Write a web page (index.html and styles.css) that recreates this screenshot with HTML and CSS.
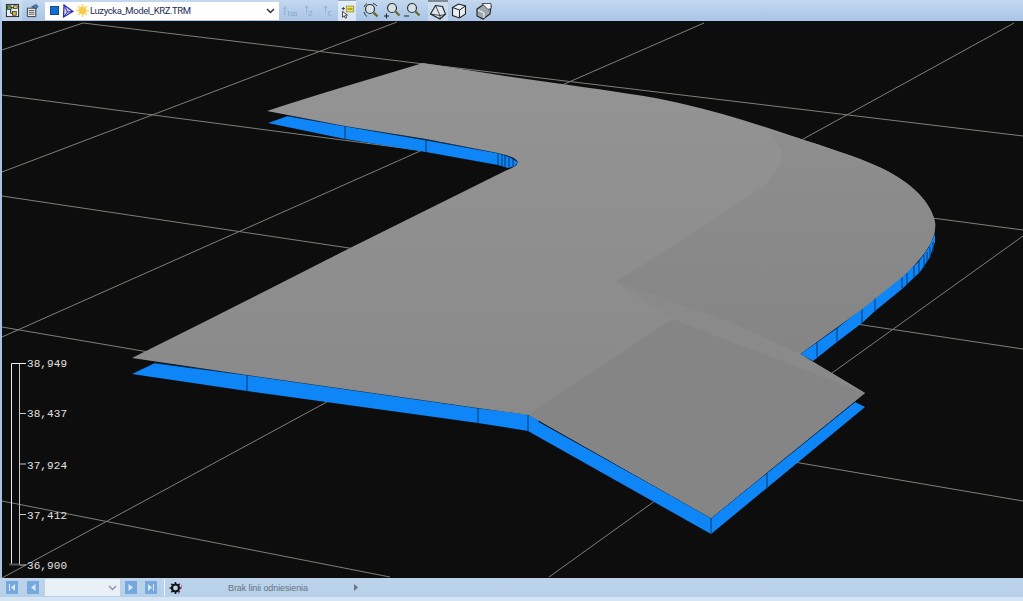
FILE: index.html
```html
<!DOCTYPE html>
<html lang="pl">
<head>
<meta charset="utf-8">
<title>Luzycka_Model_KRZ.TRM</title>
<link rel="stylesheet" href="styles.css">
</head>
<body>
<div class="app">
  <header class="toolbar">
    <div class="tool tool-hot">
      <svg class="ico" viewBox="0 0 16 16"><rect x="1.500" y="1.500" width="13" height="13" fill="#e8eef5" stroke="#222"/><path d="M4 5h8M6 5v6h4" fill="none" stroke="#222"/><rect x="2.500" y="3" width="4" height="4" fill="#5aa84a" stroke="#222" stroke-width=".7"/><rect x="9" y="3" width="4" height="3" fill="#e5d24a" stroke="#222" stroke-width=".7"/><rect x="8" y="9" width="4" height="4" fill="#d9b53a" stroke="#222" stroke-width=".7"/></svg>
    </div>
    <div class="tool">
      <svg class="ico" viewBox="0 0 16 16"><path d="M2.500 5.500h9v9h-9z" fill="#eee" stroke="#333"/><path d="M4 8h6M4 10h6M4 12h6" stroke="#555"/><path d="M7 4l5-2.500 2 2.500-2 2z" fill="#3f7fc4" stroke="#234" stroke-width=".6"/></svg>
    </div>
    <div class="combo combo-model">
      <svg class="ico-sq" viewBox="0 0 10 10"><rect x=".5" y=".5" width="9" height="9" fill="#0f6fd6" stroke="#123e7a"/></svg>
      <svg class="ico-tri" viewBox="0 0 12 14"><path d="M2 1l9 6.500L1.500 13z" fill="#d6d6f6" stroke="#2a2ab0" stroke-width="1.200"/><path d="M2 1l3.500 7L1.500 13M5.500 8L11 7.500" fill="none" stroke="#2a2ab0"/></svg>
      <svg class="ico-sun" viewBox="0 0 14 14"><path d="M7 0v14M0 7h14M2 2l10 10M12 2L2 12" stroke="#f9dc80" stroke-width="2"/><circle cx="7" cy="7" r="4" fill="#f6cb4a"/></svg>
      <span class="combo-text">Luzycka_Model_KRZ.TRM</span>
      <svg class="chev" viewBox="0 0 9 6"><path d="M1 1l3.500 3.500L8 1" fill="none" stroke="#333" stroke-width="1.500"/></svg>
    </div>
    <div class="tool-group group-axes">
      <div class="tool"><svg class="ico" viewBox="0 0 16 16"><path d="M3 13V5M1.500 6.500L3 4l1.500 2.500" fill="none" stroke="#8fb0cf"/><path d="M6 9h2M7 9v5M9.500 10h2.500v3.500H9.500zM13 10h2.500v3.500H13z" fill="none" stroke="#8fb0cf"/></svg></div>
      <div class="tool"><svg class="ico" viewBox="0 0 16 16"><path d="M6 11V4M4.500 5.500L6 3l1.500 2.500" fill="none" stroke="#8fb0cf"/><path d="M8 9h4l-4 4h4" fill="none" stroke="#8fb0cf"/></svg></div>
      <div class="tool"><svg class="ico" viewBox="0 0 16 16"><path d="M6 11V4M4.500 5.500L6 3l1.500 2.500" fill="none" stroke="#8fb0cf"/><path d="M12 9H9v4h3" fill="none" stroke="#8fb0cf"/></svg></div>
    </div>
    <div class="tool tool-lit">
      <svg class="ico" viewBox="0 0 18 18"><rect x="7.500" y="2.500" width="9" height="7" fill="#f2e34c" stroke="#7d7a30" stroke-width=".8"/><path d="M9 6h6" stroke="#55552a"/><path d="M2 5.500h4M4 3.500v4" stroke="#333"/><path d="M3 9l0 7 2-2 1.500 3 1.500-.7-1.500-3h2.500z" fill="#fff" stroke="#111" stroke-width=".9"/></svg>
    </div>
    <div class="tool-group group-zoom">
      <div class="tool"><svg class="ico ico-lg" viewBox="0 0 18 18"><circle cx="8" cy="7" r="4.500" fill="#d5e3e6" stroke="#333" stroke-width="1.200"/><path d="M11.500 10.500l4 4" stroke="#6d6a2c" stroke-width="2.400"/><path d="M2 5A7 7 0 0 1 5 1.500M11 1.500A7 7 0 0 1 15 4M2 10a7 7 0 0 0 3 4.500" fill="none" stroke="#333"/></svg></div>
      <div class="tool"><svg class="ico ico-lg" viewBox="0 0 18 18"><circle cx="9" cy="6" r="4.500" fill="#d5e3e6" stroke="#333" stroke-width="1.200"/><path d="M12.500 9.500l4 4" stroke="#6d6a2c" stroke-width="2.400"/><path d="M1 14h5M3.500 11.500v5" stroke="#222"/></svg></div>
      <div class="tool"><svg class="ico ico-lg" viewBox="0 0 18 18"><circle cx="9" cy="6" r="4.500" fill="#d5e3e6" stroke="#333" stroke-width="1.200"/><path d="M12.500 9.500l4 4" stroke="#6d6a2c" stroke-width="2.400"/><path d="M1 14h5" stroke="#222"/></svg></div>
    </div>
    <div class="tool tool-checked">
      <svg class="ico ico-lg" viewBox="0 0 18 18"><path d="M1.500 11l5-8.500 7 1 3 7.500-5.500 5z" fill="#dfe6ee" stroke="#222" stroke-width="1.100"/><path d="M1.500 11l9.500 1.500 5.500-1M11 12.500v3.500M6.500 2.500l4.500 10" fill="none" stroke="#222" stroke-width=".8"/></svg>
    </div>
    <div class="tool tool-cube">
      <svg class="ico ico-lg" viewBox="0 0 18 18"><path d="M2.500 5.500l6-3.500 7 2v8l-6 4-7-2.500z" fill="#e8eef4" stroke="#222" stroke-width="1.100"/><path d="M2.500 5.500l7 2.500 6-4M9.500 8v8" fill="none" stroke="#222"/></svg>
    </div>
    <div class="tool tool-solid">
      <svg class="ico ico-lg" viewBox="0 0 18 18"><path d="M2 7l7-5 7 2-1 8-7 5-6-3z" fill="#9da7b0" stroke="#222" stroke-width="1.100"/><path d="M7 1.500h9v5l-3 1z" fill="#f3f3f3" stroke="#333" stroke-width=".8"/><path d="M3 8l6 3v5" fill="none" stroke="#fff"/></svg>
    </div>
  </header>

  <main class="scene">
    <svg class="canvas" viewBox="2 21 1021 557" xmlns="http://www.w3.org/2000/svg">
      <defs>
        <linearGradient id="topface" gradientUnits="userSpaceOnUse" x1="0" y1="60" x2="0" y2="430">
          <stop offset="0" stop-color="#949494"/>
          <stop offset="1" stop-color="#898989"/>
        </linearGradient>
        <linearGradient id="rightface" gradientUnits="userSpaceOnUse" x1="0" y1="135" x2="0" y2="340">
          <stop offset="0" stop-color="#8e8e8e"/>
          <stop offset="1" stop-color="#858585"/>
        </linearGradient>
      </defs>
      <rect class="bg" x="0" y="0" width="1023" height="601"/>
      <g class="grid">
        <path d="M83 23L1023 136"/>
        <path d="M2 95L1023 230"/>
        <path d="M2 196L1023 349"/>
        <path d="M2 327L1023 501"/>
        <path d="M2 501L390 577"/>
        <path d="M2 50L83 23"/>
        <path d="M2 172L397 22"/>
        <path d="M2 337L418 152L569 82L704 23"/>
        <path d="M2 578L325 403L805 138L1014 23"/>
        <path d="M549 577L652 503L832 373L1023 236"/>
      </g>

      <path class="side" d="M268 123L288 116L345 126L426 140L498 153L510 157L518 162L515 166L508 168L498 165L426 152L345 139Z"/>
      <path class="side" d="M132 374L155 363L247 375L478 408L528 414L540 420L528 431L478 423L247 391Z"/>
      <path class="side" d="M528 416L711 518L711 534L528 431Z"/>
      <path class="side" d="M711 518L855 402L865 407L711 534Z"/>
      <path class="side" d="M800 354L817 342L837 328L862 308L875 298L902 276L918 262L928 248L935 233L935 242L930 257L920 272L902 289L875 311L862 323L837 342L813 361Z"/>

      <g class="rib">
        <path d="M345 126V139M426 140V152M498 153V165M502 154V166M505 155V167M509 157V167M513 159V166"/>
        <path d="M247 375V391M478 408V423M528 414V431M711 518V534M767 473V489"/>
        <path d="M817 342V357M837 328V342M862 308V323M875 298V311M902 277V288M907 273V285M914 266V278M919 260V273M924 255V268M927 252V263M930 247V258M933 242V253"/>
      </g>
      <path class="edge" d="M288 116L345 126L426 140L498 153L510 157L518 162M155 363L247 375L478 408L528 414L711 518L855 402M800 354L817 342L837 328L862 308L875 298L902 276L918 262L928 248L935 233"/>

      <path class="face" d="M267 111C290 103 315 96 340 88L423 63L512 77L569 85C610 91 650 96 679 103C720 112 760 125 795 137C825 147 855 156 879 167C905 179 930 198 935 222C937 238 925 256 902 277L862 309L800 354L865 393L711 518L529 415L478 408L247 375L132 358L210 319L350 248L507 170C513 168 518 165 518 162C516 158 510 156 498 153L426 139L345 126Z"/>
      <path class="facet-right" d="M769 132C775 140 782 148 782 155C781 165 772 178 762 188L712 220L616 282L725 320L800 354L862 309L902 277C925 256 937 238 935 222C930 198 905 179 879 167C855 156 825 147 795 137Z"/>
      <path class="facet-mid" d="M616 282L725 320L800 354L865 393L672 319Z"/>
      <path class="facet-low" d="M529 415L672 319L865 393L711 518Z"/>

      <g class="legend">
        <path class="legend-outer" d="M26 363.500H11.500V564.500"/>
        <path class="legend-inner" d="M19.500 363.500V564.500M19.500 413.500H26M19.500 464H26M19.500 514.500H26M19.500 565H26"/>
        <path class="legend-base" d="M9 564.500H19"/>
        <text x="27" y="367">38,949</text>
        <text x="27" y="417">38,437</text>
        <text x="27" y="469">37,924</text>
        <text x="27" y="519">37,412</text>
        <text x="27" y="569">36,900</text>
      </g>
    </svg>
  </main>

  <footer class="statusbar">
    <div class="nav nav-left">
      <svg class="nav-btn" viewBox="0 0 12 13"><rect width="12" height="13" fill="#76a8e0"/><path d="M9 3v7L5 6.500zM3 3h1v7H3z" fill="#dbe9f7"/></svg>
      <svg class="nav-btn" viewBox="0 0 12 13"><rect width="12" height="13" fill="#76a8e0"/><path d="M8.500 3v7L4 6.500z" fill="#dbe9f7"/></svg>
    </div>
    <div class="combo combo-nav">
      <svg class="chev chev-light" viewBox="0 0 9 6"><path d="M1 1l3.500 3.500L8 1" fill="none" stroke="#8d99a5" stroke-width="1.500"/></svg>
    </div>
    <div class="nav nav-right">
      <svg class="nav-btn" viewBox="0 0 12 13"><rect width="12" height="13" fill="#76a8e0"/><path d="M3.500 3v7L8 6.500z" fill="#dbe9f7"/></svg>
      <svg class="nav-btn" viewBox="0 0 12 13"><rect width="12" height="13" fill="#76a8e0"/><path d="M3 3v7l4-3.500zM8 3h1v7H8z" fill="#dbe9f7"/></svg>
    </div>
    <span class="sep"></span>
    <svg class="gear" viewBox="0 0 14 14"><circle cx="6.500" cy="7" r="3.500" fill="none" stroke="#111" stroke-width="2.200"/><path d="M6.500 1v12M.5 7h12M2.300 2.800l8.400 8.400M10.700 2.800l-8.400 8.400" stroke="#111" stroke-width="1.500" stroke-dasharray="2 8"/><path d="M9 13l4-9" stroke="#b84a7a" stroke-width=".8"/></svg>
    <span class="status-text">Brak linii odniesienia</span>
    <svg class="status-arrow" viewBox="0 0 4 7"><path d="M0 0l4 3.500L0 7z" fill="#6b7785"/></svg>
  </footer>
</div>
</body>
</html>
```
FILE: styles.css
```css
* { box-sizing: border-box; }
html, body { margin: 0; height: 100%; overflow: hidden; background: #d3e3f3; }
.app { display: flex; flex-direction: column; width: 1023px; height: 601px; }

.toolbar {
  height: 21px;
  flex: none;
  display: flex;
  align-items: center;
  padding-left: 2px;
  background: linear-gradient(#c4d8ef, #b7cfeb 45%, #a9c5e7);
  font-family: Roboto, "Liberation Sans", Arial, sans-serif;
}
.tool { width: 20px; height: 21px; display: flex; align-items: center; justify-content: center; flex: none; }
.tool-hot { background: linear-gradient(#cfe0f3, #bcd3ec); }
.tool-group { display: flex; flex: none; }
.ico { width: 15px; height: 15px; display: block; }
.ico-lg { width: 18px; height: 18px; }
.combo-model {
  width: 234px;
  height: 18px;
  margin-left: 3px;
  display: flex;
  align-items: center;
  background: #fff;
  padding-left: 5px;
  flex: none;
}
.ico-sq { width: 9px; height: 9px; flex: none; }
.ico-tri { width: 12px; height: 14px; margin-left: 3px; flex: none; }
.ico-sun { width: 13px; height: 13px; margin-left: 2px; flex: none; }
.combo-text { font-size: 9.500px; color: #1c2e57; margin-left: 1px; white-space: nowrap; letter-spacing: -.4px; }
.chev { width: 9px; height: 6px; margin-left: auto; margin-right: 4px; flex: none; }

.group-axes { margin-left: 1px; margin-right: 1px; }
.group-axes .tool { width: 19px; }
.tool-lit { width: 18px; background: linear-gradient(#e4eef9, #d5e4f4); border-top: 1px solid #9aa7b5; }
.group-zoom { margin-left: 5px; }
.group-zoom .tool { width: 20.500px; }
.tool-checked { width: 20px; margin-left: 5px; background: linear-gradient(#cfdff1, #c2d7ee); border-top: 2px solid #7f8a96; }
.tool-cube { width: 23px; }
.tool-solid { width: 27px; }

.scene { flex: none; height: 557px; border-left: 2px solid #a9c3df; background: #0d0d0d; }
.canvas { display: block; width: 1021px; height: 557px; }
.bg { fill: #0d0d0d; }
.grid path { fill: none; stroke: #7f7f78; stroke-width: 1; }
.side { fill: #0f86f8; }
.rib path { fill: none; stroke: #07386e; stroke-width: 1; }
.edge { fill: none; stroke: #07305c; stroke-width: 1; }
.face { fill: url(#topface); }
.facet-right { fill: url(#rightface); }
.facet-mid { fill: #8a8a8a; }
.facet-low { fill: #858585; }
.legend-outer { fill: none; stroke: #f0f0f0; stroke-width: 1; }
.legend-inner { fill: none; stroke: #c8c8c8; stroke-width: 1; }
.legend-base { fill: none; stroke: #555; stroke-width: 2; }
.legend text { font-family: "Liberation Mono", "Courier New", monospace; font-size: 11px; fill: #e2e2e2; letter-spacing: .08px; }

.statusbar {
  flex: none;
  height: 23px;
  display: flex;
  align-items: center;
  padding: 0 0 4px 6px;
  background: linear-gradient(#bcd3ea 0, #b7d1ea 19px, #d6e5f3 19px);
  font-family: "Liberation Sans", Arial, sans-serif;
}
.nav { display: flex; flex: none; }
.nav-left { gap: 9px; }
.nav-right { gap: 8px; margin-left: 5px; }
.nav-btn { width: 12px; height: 13px; display: block; }
.combo-nav {
  width: 75px;
  height: 17px;
  margin-left: 6px;
  background: #e9f0f6;
  display: flex;
  align-items: center;
  flex: none;
}
.chev-light { margin-right: 3px; }
.sep { width: 1px; height: 17px; background: #eef4fa; margin-left: 7px; flex: none; }
.gear { width: 14px; height: 14px; margin-left: 4px; flex: none; }
.status-text { font-size: 9px; color: #66727f; margin-left: 45px; white-space: nowrap; width: 126px; flex: none; letter-spacing: -.1px; }
.status-arrow { width: 4px; height: 7px; flex: none; }
```
